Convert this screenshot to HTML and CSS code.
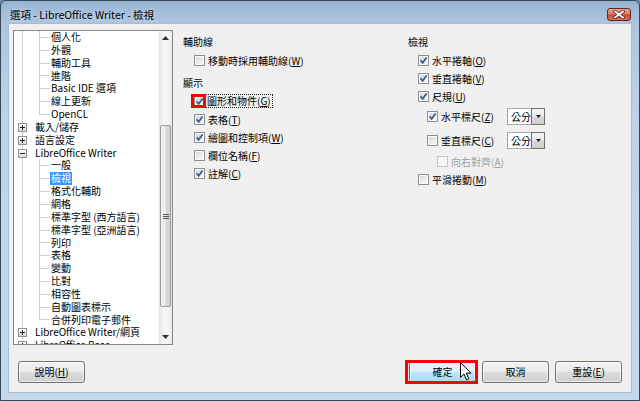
FILE: index.html
```html
<!DOCTYPE html>
<html lang="zh-Hant">
<head>
    <meta charset="UTF-8">
    <meta name="viewport" content="width=device-width, initial-scale=1.0">
    <title>選項 - LibreOffice Writer - 檢視</title>
    <link rel="stylesheet" href="styles.css">
</head>
<body>
    <div class="window">
        <div class="titlebar">
            <span class="title">選項 - LibreOffice Writer - 檢視</span>
            <span class="close">
                <svg width="12" height="9" viewBox="0 0 12 9">
                    <path d="M2 1.5 L10 7.5 M10 1.5 L2 7.5" stroke="#5a1d12" stroke-width="3.4" stroke-linecap="square"/>
                    <path d="M2 1.5 L10 7.5 M10 1.5 L2 7.5" stroke="#fff" stroke-width="1.8" stroke-linecap="square"/>
                </svg>
            </span>
        </div>

        <div class="client">
            <div class="main">
                <!-- option tree -->
                <div class="tree">
                    <div class="tree-list">
                        <div class="node leaf">個人化</div>
                        <div class="node leaf">外觀</div>
                        <div class="node leaf">輔助工具</div>
                        <div class="node leaf">進階</div>
                        <div class="node leaf">Basic IDE 選項</div>
                        <div class="node leaf">線上更新</div>
                        <div class="node leaf last">OpenCL</div>
                        <div class="node parent"><span class="exp"><svg width="7" height="7" viewBox="0 0 7 7"><path d="M1 3.5h5M3.5 1v5" stroke="#222"/></svg></span>載入/儲存</div>
                        <div class="node parent"><span class="exp"><svg width="7" height="7" viewBox="0 0 7 7"><path d="M1 3.5h5M3.5 1v5" stroke="#222"/></svg></span>語言設定</div>
                        <div class="node parent"><span class="exp"><svg width="7" height="7" viewBox="0 0 7 7"><path d="M1 3.5h5" stroke="#222"/></svg></span>LibreOffice Writer</div>
                        <div class="node leaf">一般</div>
                        <div class="node leaf"><span class="selected">檢視</span></div>
                        <div class="node leaf">格式化輔助</div>
                        <div class="node leaf">網格</div>
                        <div class="node leaf">標準字型 (西方語言)</div>
                        <div class="node leaf">標準字型 (亞洲語言)</div>
                        <div class="node leaf">列印</div>
                        <div class="node leaf">表格</div>
                        <div class="node leaf">變動</div>
                        <div class="node leaf">比對</div>
                        <div class="node leaf">相容性</div>
                        <div class="node leaf">自動圖表標示</div>
                        <div class="node leaf last">合併列印電子郵件</div>
                        <div class="node parent"><span class="exp"><svg width="7" height="7" viewBox="0 0 7 7"><path d="M1 3.5h5M3.5 1v5" stroke="#222"/></svg></span>LibreOffice Writer/網頁</div>
                        <div class="node parent"><span class="exp"><svg width="7" height="7" viewBox="0 0 7 7"><path d="M1 3.5h5M3.5 1v5" stroke="#222"/></svg></span>LibreOffice Base</div>
                    </div>
                    <div class="vscroll">
                        <div class="sb-btn"><svg width="7" height="4" viewBox="0 0 7 4"><path d="M0 4 L3.5 0 L7 4 Z" fill="#333"/></svg></div>
                        <div class="sb-track">
                            <div class="sb-thumb">
                                <svg width="6" height="5" viewBox="0 0 6 5"><path d="M0 0.5h6M0 2.5h6M0 4.5h6" stroke="#555"/></svg>
                            </div>
                        </div>
                        <div class="sb-btn"><svg width="7" height="4" viewBox="0 0 7 4"><path d="M0 0 L7 0 L3.5 4 Z" fill="#333"/></svg></div>
                    </div>
                </div>

                <!-- options page -->
                <div class="pane">
                    <div class="col col-left">
                        <div class="heading">輔助線</div>
                        <div class="opt"><span class="cb"></span><span>移動時採用輔助線(<u>W</u>)</span></div>

                        <div class="heading gap">顯示</div>
                        <div class="opt"><span class="cb checked marked"><svg width="9" height="9" viewBox="0 0 9 9"><path d="M1.5 4.3 L3.6 6.8 L7.6 1.6" stroke="#3b5495" stroke-width="1.7" fill="none"/></svg></span><span class="focus">圖形和物件(<u>G</u>)</span></div>
                        <div class="opt"><span class="cb checked"><svg width="9" height="9" viewBox="0 0 9 9"><path d="M1.5 4.3 L3.6 6.8 L7.6 1.6" stroke="#3b5495" stroke-width="1.7" fill="none"/></svg></span><span>表格(<u>T</u>)</span></div>
                        <div class="opt"><span class="cb checked"><svg width="9" height="9" viewBox="0 0 9 9"><path d="M1.5 4.3 L3.6 6.8 L7.6 1.6" stroke="#3b5495" stroke-width="1.7" fill="none"/></svg></span><span>繪圖和控制項(<u>W</u>)</span></div>
                        <div class="opt"><span class="cb"></span><span>欄位名稱(<u>F</u>)</span></div>
                        <div class="opt"><span class="cb checked"><svg width="9" height="9" viewBox="0 0 9 9"><path d="M1.5 4.3 L3.6 6.8 L7.6 1.6" stroke="#3b5495" stroke-width="1.7" fill="none"/></svg></span><span>註解(<u>C</u>)</span></div>
                    </div>

                    <div class="col col-right">
                        <div class="heading">檢視</div>
                        <div class="opt"><span class="cb checked"><svg width="9" height="9" viewBox="0 0 9 9"><path d="M1.5 4.3 L3.6 6.8 L7.6 1.6" stroke="#3b5495" stroke-width="1.7" fill="none"/></svg></span><span>水平捲軸(<u>O</u>)</span></div>
                        <div class="opt"><span class="cb checked"><svg width="9" height="9" viewBox="0 0 9 9"><path d="M1.5 4.3 L3.6 6.8 L7.6 1.6" stroke="#3b5495" stroke-width="1.7" fill="none"/></svg></span><span>垂直捲軸(<u>V</u>)</span></div>
                        <div class="opt"><span class="cb checked"><svg width="9" height="9" viewBox="0 0 9 9"><path d="M1.5 4.3 L3.6 6.8 L7.6 1.6" stroke="#3b5495" stroke-width="1.7" fill="none"/></svg></span><span>尺規(<u>U</u>)</span></div>
                        <div class="opt sub ruler"><span class="cb checked"><svg width="9" height="9" viewBox="0 0 9 9"><path d="M1.5 4.3 L3.6 6.8 L7.6 1.6" stroke="#3b5495" stroke-width="1.7" fill="none"/></svg></span><span class="ruler-label">水平標尺(<u>Z</u>)</span>
                            <span class="combo"><span class="combo-text">公分</span><span class="combo-btn"><svg width="5" height="3" viewBox="0 0 5 3"><path d="M0 0h5L2.5 3z" fill="#111"/></svg></span></span>
                        </div>
                        <div class="opt sub ruler second"><span class="cb"></span><span class="ruler-label">垂直標尺(<u>C</u>)</span>
                            <span class="combo"><span class="combo-text">公分</span><span class="combo-btn"><svg width="5" height="3" viewBox="0 0 5 3"><path d="M0 0h5L2.5 3z" fill="#111"/></svg></span></span>
                        </div>
                        <div class="opt sub2 disabled"><span class="cb"></span><span>向右對齊(<u>A</u>)</span></div>
                        <div class="opt"><span class="cb"></span><span>平滑捲動(<u>M</u>)</span></div>
                    </div>
                </div>
            </div>

            <div class="buttons">
                <button class="btn">說明(<u>H</u>)</button>
                <span class="mark-wrap">
                    <button class="btn hot">確定</button>
                    <svg class="cursor" width="12" height="19" viewBox="0 0 12 19">
                        <path d="M0.5 0.5 L0.5 15.5 L4 12 L6.5 17.8 L8.8 16.8 L6.3 11.2 L11 11.2 Z" fill="#fff" stroke="#000" stroke-width="1"/>
                    </svg>
                </span>
                <button class="btn">取消</button>
                <button class="btn">重設(<u>E</u>)</button>
            </div>
        </div>
    </div>
</body>
</html>
```

FILE: styles.css
```css
html, body {
    margin: 0;
    padding: 0;
}
body {
    width: 640px;
    height: 401px;
    overflow: hidden;
    font-family: "Noto Sans CJK TC", "Liberation Sans", sans-serif;
    font-size: 10px;
    color: #000;
    background: #6d8fb8;
}
.window {
    box-sizing: border-box;
    width: 640px;
    height: 401px;
    border: 1px solid #3b4656;
    border-radius: 6px 6px 0 0;
    background: linear-gradient(#98b3d3, #adc5e0 22px, #bdd3ea 120px, #c4d8ed);
    display: flex;
    flex-direction: column;
}
.titlebar {
    box-sizing: border-box;
    height: 22px;
    padding: 5px 8px 0 9px;
    display: flex;
    align-items: center;
    justify-content: space-between;
}
.title {
    font-size: 10.5px;
    line-height: 17px;
    text-shadow: 0 0 6px rgba(255, 255, 255, 0.7);
}
.close {
    box-sizing: border-box;
    width: 24px;
    height: 13px;
    border: 1px solid #5e2a20;
    border-radius: 3px;
    background: linear-gradient(#e9a897, #d97a63 45%, #c64a2f 55%, #d6735b);
    display: flex;
    align-items: center;
    justify-content: center;
}
.client {
    flex: 1;
    margin: 0 7px 7px;
    box-sizing: border-box;
    border: 1px solid #a9bcd3;
    background: #f0f0f0;
    padding: 6px 9px 0 4px;
}
.main {
    display: flex;
    height: 315px;
}

/* tree */
.tree {
    box-sizing: border-box;
    width: 160px;
    height: 315px;
    border: 1px solid #828790;
    background: #fff;
    display: flex;
    overflow: hidden;
}
.tree-list {
    flex: 1;
    overflow: hidden;
}
.node {
    height: 12.85px;
    line-height: 12.85px;
    white-space: nowrap;
    background: linear-gradient(#d0d0d0, #d0d0d0) 8px 0 / 1px 100% no-repeat;
}
.leaf {
    padding-left: 37px;
    background:
        linear-gradient(#d0d0d0, #d0d0d0) 8px 0 / 1px 100% no-repeat,
        linear-gradient(#d0d0d0, #d0d0d0) 25px 0 / 1px 100% no-repeat,
        linear-gradient(#d0d0d0, #d0d0d0) 25px 50% / 11px 1px no-repeat;
}
.leaf.last {
    background:
        linear-gradient(#d0d0d0, #d0d0d0) 8px 0 / 1px 100% no-repeat,
        linear-gradient(#d0d0d0, #d0d0d0) 25px 0 / 1px 50% no-repeat,
        linear-gradient(#d0d0d0, #d0d0d0) 25px 50% / 11px 1px no-repeat;
}
.parent {
    display: flex;
    align-items: center;
    padding-left: 4px;
}
.exp {
    box-sizing: border-box;
    width: 9px;
    height: 9px;
    margin-right: 8px;
    border: 1px solid #919191;
    background: linear-gradient(#fff, #dadada);
    display: flex;
    flex: none;
}
.selected {
    display: inline-block;
    background: #3399ff;
    color: #fff;
    padding: 0 1px;
    margin-left: -1px;
}
.vscroll {
    width: 13px;
    display: flex;
    flex-direction: column;
    background: linear-gradient(90deg, #e4e4e4, #f6f6f6 35%, #f6f6f6 65%, #e8e8e8);
}
.sb-btn {
    height: 14px;
    display: flex;
    align-items: center;
    justify-content: center;
}
.sb-track {
    flex: 1;
}
.sb-thumb {
    box-sizing: border-box;
    margin: 80px 0 0 1px;
    width: 11px;
    height: 182px;
    border: 1px solid #9a9a9a;
    border-radius: 2px;
    background: linear-gradient(90deg, #f4f4f4, #e9e9e9 50%, #d9d9d9 51%, #d2d2d2);
    display: flex;
    align-items: center;
    justify-content: center;
}

/* options page */
.pane {
    flex: 1;
    margin-left: 10px;
    padding-top: 3px;
    display: grid;
    grid-template-columns: 225px 1fr;
    align-content: start;
}
.heading {
    height: 18px;
    line-height: 18px;
}
.heading.gap {
    margin-top: 5px;
}
.opt {
    height: 18px;
    display: flex;
    align-items: center;
    gap: 3px;
    white-space: nowrap;
}
.col-left .opt {
    padding-left: 11px;
}
.col-right .opt {
    padding-left: 10px;
}
.col-right .opt.sub {
    padding-left: 19px;
}
.col-right .opt.sub2 {
    padding-left: 29px;
}
.opt.ruler {
    height: 22px;
}
.opt.ruler.second {
    margin-top: 2px;
}
.opt.sub2 {
    margin-top: 1px;
}
.cb {
    position: relative;
    box-sizing: border-box;
    width: 11px;
    height: 11px;
    flex: none;
    border: 1px solid #8e8f8f;
    background: linear-gradient(135deg, #d2d5da, #f4f4f4 80%);
    box-shadow: inset 0 0 0 1px #fafafa;
    display: flex;
    align-items: center;
    justify-content: center;
}
.cb.marked::after {
    content: "";
    position: absolute;
    left: -4px;
    top: -3px;
    right: -2px;
    bottom: -2px;
    border: 3px solid #ff0000;
}
.disabled {
    color: #a0a0a0;
}
.disabled .cb {
    border-color: #c5c5c5;
    background: #f4f4f4;
}
.focus {
    display: inline-block;
    height: 12px;
    line-height: 12px;
    padding: 0 1px;
    margin-left: -2px;
    outline: 1px dotted #222;
}
.ruler-label {
    display: inline-block;
    width: 63px;
}
.combo {
    box-sizing: border-box;
    width: 38px;
    height: 17px;
    border: 1px solid #a4a7ad;
    background: #fff;
    display: flex;
}
.combo-text {
    flex: 1;
    padding-left: 3px;
    line-height: 15px;
}
.combo-btn {
    box-sizing: border-box;
    width: 14px;
    border: 1px solid #707070;
    margin: -1px -1px -1px 0;
    background: linear-gradient(#f3f3f3, #e6e6e6 50%, #d6d6d6 51%, #cdcdcd);
    display: flex;
    align-items: center;
    justify-content: center;
}

/* buttons */
.buttons {
    margin-top: 16px;
    padding-left: 5px;
    display: flex;
    gap: 6px;
}
.btn {
    box-sizing: border-box;
    width: 67px;
    height: 22px;
    padding: 0;
    margin: 0;
    font: inherit;
    color: #000;
    border: 1px solid #707070;
    border-radius: 3px;
    background: linear-gradient(#f2f2f2, #ebebeb 50%, #dddddd 51%, #cfcfcf);
    box-shadow: inset 0 0 0 1px rgba(255, 255, 255, 0.6);
    text-align: center;
    line-height: 20px;
}
.btn.hot {
    border-color: #3c7fb1;
    background: linear-gradient(#eaf6fd, #d9f0fc 50%, #bee6fd 51%, #a7d9f5);
}
.mark-wrap {
    position: relative;
    display: flex;
    margin-left: auto;
}
.mark-wrap::after {
    content: "";
    position: absolute;
    left: -4px;
    right: -2px;
    top: -1px;
    bottom: -1px;
    border: 3px solid #ff0000;
    pointer-events: none;
}
.cursor {
    position: absolute;
    left: 51px;
    top: 1px;
    z-index: 2;
}
```
